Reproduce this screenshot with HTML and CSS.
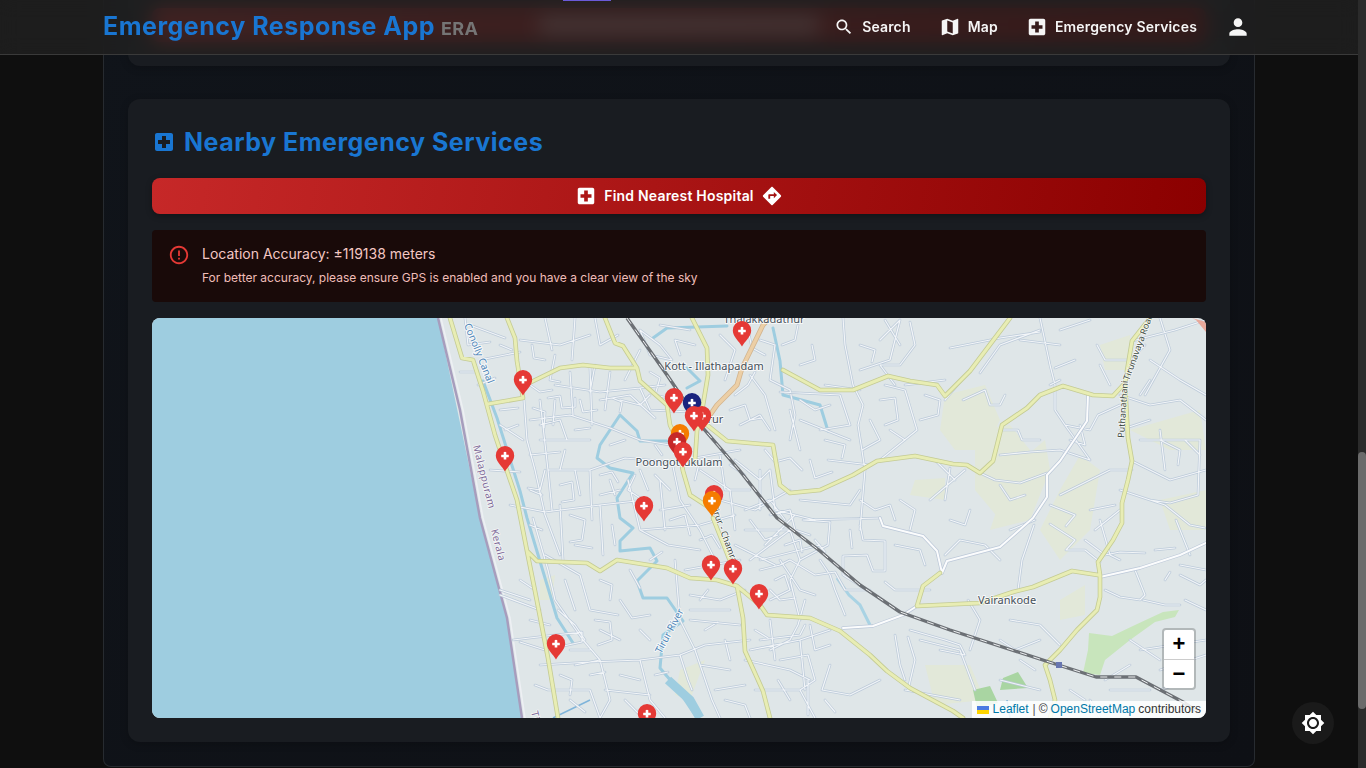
FILE: index.html
```html
<!DOCTYPE html>
<html lang="en">
<head>
<meta charset="utf-8">
<title>Emergency Response App</title>
<link rel="stylesheet" href="styles.css">
</head>
<body>
<svg class="defs" width="0" height="0" aria-hidden="true">
  <defs>
    <symbol id="i-search" viewBox="0 0 24 24"><path d="M15.5 14h-.79l-.28-.27C15.41 12.59 16 11.11 16 9.5 16 5.91 13.09 3 9.5 3S3 5.91 3 9.5 5.91 16 9.5 16c1.61 0 3.09-.59 4.23-1.57l.27.28v.79l5 4.99L20.49 19l-4.99-5zm-6 0C7.01 14 5 11.99 5 9.5S7.01 5 9.5 5 14 7.01 14 9.5 11.99 14 9.5 14z"/></symbol>
    <symbol id="i-map" viewBox="0 0 24 24"><path d="M20.5 3l-.16.03L15 5.1 9 3 3.36 4.9c-.21.07-.36.25-.36.48V20.5c0 .28.22.5.5.5l.16-.03L9 18.9l6 2.1 5.64-1.9c.21-.07.36-.25.36-.48V3.5c0-.28-.22-.5-.5-.5zM15 19l-6-2.11V5l6 2.11V19z"/></symbol>
    <symbol id="i-hospital" viewBox="0 0 24 24"><path d="M19 3H5c-1.1 0-1.99.9-1.99 2L3 19c0 1.1.9 2 2 2h14c1.1 0 2-.9 2-2V5c0-1.1-.9-2-2-2zm-1 11h-4v4h-4v-4H6v-4h4V6h4v4h4v4z"/></symbol>
    <symbol id="i-person" viewBox="0 0 24 24"><path d="M12 12c2.21 0 4-1.79 4-4s-1.79-4-4-4-4 1.79-4 4 1.79 4 4 4zm0 2c-2.67 0-8 1.34-8 4v2h16v-2c0-2.66-5.33-4-8-4z"/></symbol>
    <symbol id="i-directions" viewBox="0 0 24 24"><path d="M21.71 11.29l-9-9c-.39-.39-1.02-.39-1.41 0l-9 9c-.39.39-.39 1.02 0 1.41l9 9c.39.39 1.02.39 1.41 0l9-9c.39-.38.39-1.01 0-1.41zM14 14.5V12h-4v3H8v-4c0-.55.45-1 1-1h5V7.5l3.5 3.5-3.5 3.5z"/></symbol>
    <symbol id="i-error" viewBox="0 0 24 24"><path d="M11 15h2v2h-2zm0-8h2v6h-2zm.99-5C6.47 2 2 6.48 2 12s4.47 10 9.99 10C17.52 22 22 17.52 22 12S17.52 2 11.99 2zM12 20c-4.42 0-8-3.58-8-8s3.58-8 8-8 8 3.58 8 8-3.58 8-8 8z"/></symbol>
    <symbol id="i-bright" viewBox="0 0 24 24"><path d="M20 8.69V4h-4.69L12 .69 8.69 4H4v4.69L.69 12 4 15.31V20h4.69L12 23.31 15.31 20H20v-4.69L23.31 12 20 8.69zM12 18c-3.31 0-6-2.69-6-6s2.69-6 6-6 6 2.69 6 6-2.69 6-6 6zm0-10c-2.21 0-4 1.79-4 4s1.79 4 4 4 4-1.79 4-4-1.79-4-4-4z"/></symbol>
    <g id="pin-body">
      <path d="M0 15.500C-2.500 10.500-9.200 6-9.200-.5A9.200 9.500 0 1 1 9.200-.5C9.200 6 2.500 10.500 0 15.500Z"/>
      <path class="pin-plus" d="M-1.300-3.800Q0-4.500 1.300-3.800V-1.300H3.600Q4.200 0 3.600 1.300H1.300V3.600H-1.300V1.300H-3.600Q-4.200 0-3.600-1.300H-1.300Z"/>
    </g>
    <path id="minor" d="M465 318L468 345L490 342M480 360L520 352M505 338L470 325M460 372L478 372M520 340L560 345L590 335M545 318L552 350M575 318L572 360M595 318L600 345L618 335M640 330L650 355L672 360L660 345M690 330L660 325
    M524 400L527 440L535 470L545 515L560 555M530 420L570 415L610 428L640 440L670 445M540 400L548 470L590 470L625 458L672 462L740 450M570 372L573 415M590 368L592 425M610 372L605 410M555 385L600 392L640 388L665 385M540 440L590 440M548 470L552 510M590 470L592 520M520 472L490 470M523 440L500 425M600 400L630 395L655 418M640 388L650 410L690 412
    M540 425L560 420L567 440L550 440M530 455L560 452M575 470L580 495M610 480L615 495M555 355L550 380L560 382M590 392L595 365M620 400L640 405L650 395M640 350L625 380M660 345L640 330M695 345L675 340L680 355M720 335L735 350L725 380M760 340L775 345L770 380L790 390L795 415L790 440M750 375L765 395L775 430M740 425L760 415L770 430M735 460L760 480L770 470M720 455L725 490L750 490M760 470L760 510M745 510L770 500L785 520M500 345L512 350M478 385L495 378M500 410L518 408M505 430L518 425M555 400L553 425M575 430L590 428M610 445L625 440M560 470L565 450M530 490L542 495M600 495L620 490M640 470L648 490M655 475L670 490M695 480L700 460M730 465L745 475
    M532 345L534 358L545 360M548 398L560 396L562 408L575 407L575 398M533 408L545 412L544 428M580 400L583 412L597 410M612 398L622 402L620 412M650 372L660 378L655 395L668 398M530 385L540 392L552 390M545 470L540 490L528 488M560 485L572 482L574 500L562 502M600 475L612 472L618 482M635 475L628 490L640 498M655 445L662 455M730 410L745 405L750 420L762 418M735 395L748 385L755 372M765 355L752 348L748 330M782 345L795 340L798 325M800 365L815 360L812 345M800 400L815 410L830 405M765 450L775 462L790 458L802 470M810 460L815 478L832 472M825 440L845 445L842 458
    M510 505L545 512L600 505L645 500M560 505L563 560M600 505L603 555M628 480L640 530L668 545L700 550M660 480L665 530M672 462L680 500L700 530L715 560M640 530L700 525L735 515M700 470L730 490L735 530M720 500L755 510L790 490M745 530L790 530L800 560M760 560L820 545M735 545L775 565M660 510L690 505M670 520L685 515L690 535M700 540L712 535L720 548M570 515L585 520L582 540L570 542M612 525L615 545M530 525L542 530M575 545L592 548M650 560L662 552M750 520L765 540L778 535M770 515L790 510L795 530L810 535
    M533 518L548 570L555 600L583 640L600 660L610 700L600 718M545 555L580 575L590 610L618 615M520 580L535 590M500 590L530 600M558 610L575 625L585 640M513 640L555 635L582 632L582 642L545 650L520 642M540 665L590 662L640 660L680 655L705 645L750 640M640 660L650 700L665 718M680 655L688 680L692 690M600 660L575 665M548 690L590 690L600 718M605 690L650 695M500 595L540 610M565 580L575 610M620 600L632 618L650 615M600 630L620 640M620 675L640 680M570 700L585 712M625 700L640 715M530 620L550 625M600 580L612 585L610 600M630 570L640 588M560 675L572 680L570 695M590 675L605 672M655 675L668 672M535 685L548 690M595 620L610 622L612 640L598 645M640 630L650 640M570 650L590 650
    M675 560L680 620L695 650L712 700L720 718M685 570L740 560M690 595L720 600L745 590M690 610L730 610M690 620L740 625M750 650L800 640L830 630M745 660L790 670L810 680M800 640L805 690M770 620L775 660M755 690L800 690L815 718M790 580L800 620M750 560L790 530M700 665L730 670M715 690L745 685M725 640L730 660M705 630L718 622M725 700L745 705L750 718M700 600L708 590M770 590L780 600L795 598M755 630L768 638M778 680L790 700M825 700L835 712
    M760 570L780 565L790 560L815 575L835 572L845 590L870 590M843 556L867 555L873 571L885 571L885 541L863 540L860 525M843 556L843 575L870 592M803 520L830 522L828 545L800 560L790 580M790 590L770 600M780 560L800 590L815 595M820 560L830 575L835 590L845 615M765 545L780 530L795 515M805 600L798 625L790 640L770 650M810 625L815 650L830 645M760 640L800 635L805 625M780 660L808 655L815 680L800 690L775 690M808 680L808 715M830 665L822 690L850 695L880 680M895 635L900 665L905 680M908 637L915 660L908 690M910 630L945 640L960 645L965 655L940 650M930 590L895 590L885 582M968 600L980 620L970 650M803 520L880 518M785 545L800 540L802 552M815 540L825 552M850 530L852 548M775 580L785 575L790 590M860 500L875 510L890 505L895 520M900 500L915 510L910 530M895 545L920 550L925 565M950 520L965 525L970 510
    M843 318L845 345L853 385L863 405L858 425L865 470L860 530M825 385L860 390M780 392L840 395L850 425L820 430M790 410L800 450M800 420L850 440M770 470L775 510L815 520M800 500L850 505L860 490M828 460L870 465M880 340L900 320L890 360L860 370M900 345L885 320M910 322L915 345L900 365L880 365L895 385M885 385L905 390L917 430L880 460M905 385L945 380M945 400L970 370M980 373L1000 345L1040 330M950 348L1000 338L1040 332M1040 318L1050 365L1055 385L1055 410L1065 425L1090 460M1055 368L1075 360M1050 385L1060 380M1020 340L1060 345M860 345L875 350L872 362M880 400L895 398L898 420L885 425M870 420L880 440L862 450M890 430L905 440M925 395L940 400L938 415L920 420
    M1000 455L1030 452L1060 450L1090 460M980 473L995 480L1020 483L1047 473M950 468L945 500M963 400L985 390L990 405L1000 405L1005 395M1000 430L1018 430L1022 440L1040 440M935 460L955 480M930 500L965 470M1010 530L1035 520M1000 560L985 545L960 540L945 555M1060 495L1090 480L1110 470L1132 470M1050 505L1075 515L1066 526M1120 430L1150 420M1160 430L1165 470M1000 485L1010 500L1025 495M1070 440L1085 445L1080 425M1140 395L1150 380M1160 440L1180 450L1178 465M1185 440L1200 455
    M1100 520L1110 555L1120 560M1090 510L1115 505M1095 530L1120 510M1050 524L1075 540L1066 550L1085 550L1100 562M1085 540L1105 555L1120 552L1145 553M1034 525L1022 560L1018 590M1120 490L1150 500L1165 505L1190 525L1205 528M1150 500L1170 503L1198 495L1200 440M1176 520L1190 555M1155 550L1175 548M1165 580L1170 572M1180 575L1200 585L1206 580M1135 570L1145 595L1140 600L1120 597L1105 590M1143 600L1165 605L1180 605M1140 440L1200 440M1132 461L1170 480L1206 470M1120 395L1150 405L1180 400L1206 420M1132 341L1175 330L1206 320M1150 360L1180 380L1206 395M1160 318L1170 350L1145 395M1097 345L1105 360L1130 360L1145 345M1100 365L1110 385M1065 425L1090 430L1098 415L1120 405M1060 330L1090 320M1180 565L1206 570M1185 600L1206 610
    M1010 620L1040 625L1060 645M1000 640L1015 650L1040 640M1020 660L1035 670M1105 680L1130 665M1090 700L1100 718M1000 680L1040 690M920 640L960 650L975 690M905 690L960 700M1130 640L1160 660M1140 650L1206 640M1160 670L1206 655M1110 690L1150 690M1160 690L1190 680M1070 690L1085 700"/>
    <path id="major" d="M1088 395L1087 421L1060 461L1047 475L1047 497L1033 518L1000 547L947 561L942 573M942 573L937 551L923 536L883 526L880 518M917 606L903 615L873 626L843 628M1100 577L1140 568L1180 555L1206 543"/>
    <path id="main" d="M450 318L462 358L473 360L483 391L495 435L505 465L517 500L527 551L535 591L548 658L558 718
    M488 404L523 398M507 318L515 338L517 361L523 398M525 385L560 368L583 365L610 368L637 368
    M605 318L615 343L623 346L637 368L640 381L667 405L670 425L677 440L683 471L690 495L710 508M713 518L730 561
    M692 318L707 348L708 375L703 405L697 431L695 461
    M707 425L727 441L773 445L780 485L790 493L820 490L853 475L877 461L915 456L953 464L967 465L980 473L993 461L1002 425L1027 408L1040 395L1063 386L1093 395L1113 396L1125 383L1132 341L1150 318
    M783 370L820 390L853 390L888 376L910 381L937 385L945 396L970 371L1010 318
    M1125 383L1128 438L1132 461L1128 480L1122 503L1122 523L1113 540L1098 562L1100 575L1100 597L1097 610L1077 630L1060 650L1045 665L1050 680L1055 700L1050 718
    M1098 575L1072 571L1033 587L1013 592L980 603L917 606L923 586L940 573
    M527 551L537 561L587 563L600 571L617 560L667 568L690 578L717 580L737 586L760 605L767 615L810 618L840 631L870 655L887 671L910 688L953 711L963 718
    M737 586L743 618L745 651L763 691L770 718"/>
    <path id="rail" d="M627 318L667 375L703 428L740 471L777 518L820 551L860 585L900 612L950 630L1049 662L1096 677L1136 677L1183 702L1198 712"/>
  </defs>
</svg>

<div class="layout">
  <main class="page">
    <section class="card card-prev">
      <div class="prev-button"><span class="prev-label"></span></div>
    </section>
    <section class="card">
      <h2 class="section-title">
        <svg class="title-icon"><use href="#i-hospital"/></svg>
        <span>Nearby Emergency Services</span>
      </h2>
      <button class="find-btn" type="button">
        <svg class="btn-icon"><use href="#i-hospital"/></svg>
        <span class="btn-text">Find Nearest Hospital</span>
        <svg class="btn-icon"><use href="#i-directions"/></svg>
      </button>
      <div class="alert">
        <svg class="alert-icon"><use href="#i-error"/></svg>
        <div class="alert-body">
          <p class="alert-title">Location Accuracy: ±119138 meters</p>
          <p class="alert-note">For better accuracy, please ensure GPS is enabled and you have a clear view of the sky</p>
        </div>
      </div>
      <div class="map">
        <svg class="map-canvas" viewBox="152 318 1054 400" width="1054" height="400">
          <rect class="land" x="152" y="318" width="1054" height="400"/>
          <path class="grass" d="M945 395L985 385L1000 420L985 450L955 450L940 430ZM975 430L1010 425L1030 450L1000 520L975 490ZM1010 470L1045 440L1050 470L1030 520L990 530ZM1080 455L1100 470L1090 530L1060 560L1040 530L1060 490ZM915 480L945 478L945 500L910 495ZM1130 430L1200 410L1206 450L1170 450ZM1160 500L1206 490L1206 530L1170 530ZM680 670L705 660L690 700L675 695ZM540 580L555 575L552 600L540 600ZM1060 600L1085 585L1085 615L1060 620ZM1100 345L1130 335L1130 370L1105 370ZM925 665L970 665L985 700L935 705Z"/>
          <path class="forest" d="M1089 633L1112 636L1135 625L1163 612L1179 610L1175 617L1155 622L1130 640L1105 660L1100 675L1083 673L1088 650Z"/>
          <path class="forest-dark" d="M1003 678L1018 672L1028 688L1000 690ZM973 690L990 686L998 703L977 708Z"/>
          <path class="water" d="M152 318H438L480 518L507 618L522 718H152Z"/>
          <path class="boundary" d="M438 318L460 410L480 518L507 618L522 718"/>
          <path class="boundary-inner" d="M441 318L463 410L483 518L510 618L525 718"/>
          <path class="river" d="M483 381L497 418L520 491L527 518L542 568L557 618L573 643M620 415L600 445L597 458L610 468L633 473L617 498L620 518L633 528L620 541L620 551L650 548L657 561L637 581L643 598L667 598L683 621L663 635L660 668L677 688L697 718M620 415L637 431L640 441L667 441M773 328L780 361L783 395L820 405L828 431M653 338L667 328L727 326M687 368L700 381L687 388"/>
          <path class="river-wide" d="M668 680L690 700L700 718"/>
          <path class="river-pale" d="M837 578L849 595L860 605L870 625"/>
          <path class="river-thin" d="M553 718L590 700M1007 700L1010 718"/>
          <use class="road-case" href="#minor"/>
          <use class="road-fill" href="#minor"/>
          <use class="major-case" href="#major"/>
          <use class="major-fill" href="#major"/>
          <use class="main-case" href="#main"/>
          <use class="main-fill" href="#main"/>
          <path class="trunk-case" d="M770 318L763 325L742 368L737 385L717 405L710 415L695 422"/>
          <path class="trunk-fill" d="M770 318L763 325L742 368L737 385L717 405L710 415L695 422"/>
          <use class="rail-case" href="#rail"/>
          <use class="rail-dash" href="#rail"/>
          <path class="station" d="M1056 662h6v6h-6z"/>
          <path class="rail-edge" d="M1192 318L1206 322L1206 332L1196 320Z"/>
          <text class="label" x="764" y="323" text-anchor="middle">Thalakkadathur</text>
          <text class="label" x="714" y="370" text-anchor="middle">Kott - Illathapadam</text>
          <text class="label" x="679" y="466" text-anchor="middle">Poongottukulam</text>
          <text class="label" x="711" y="423" text-anchor="middle">Tirur</text>
          <text class="label" x="1007" y="604" text-anchor="middle">Vairankode</text>
          <text class="label-water" transform="translate(464 325) rotate(68)">Conolly Canal</text>
          <text class="label-water" transform="translate(661 654) rotate(-62)">Tirur River</text>
          <text class="label-admin" transform="translate(473 446) rotate(76)">Malappuram</text>
          <text class="label-admin" transform="translate(491 530) rotate(76)">Kerala</text>
          <text class="label-admin" transform="translate(531 712) rotate(76)">Tirur</text>
          <text class="label-road" transform="translate(711 506) rotate(70)">Tirur - Chamra</text>
          <text class="label-road" transform="translate(1124 438) rotate(-86)">Puthanathani -</text>
          <text class="label-road" transform="translate(1129 381) rotate(-70)">Tirunavaya Road</text>
          <use class="pin-navy" href="#pin-body" x="692" y="403"/>
          <use class="pin-red" href="#pin-body" x="742" y="331"/>
          <use class="pin-red" href="#pin-body" x="523" y="380"/>
          <use class="pin-red" href="#pin-body" x="505" y="456"/>
          <use class="pin-red" href="#pin-body" x="674" y="398"/>
          <use class="pin-red" href="#pin-body" x="702" y="416"/>
          <use class="pin-red" href="#pin-body" x="694" y="416"/>
          <use class="pin-orange" href="#pin-body" x="680" y="434"/>
          <use class="pin-dark" href="#pin-body" x="677" y="442"/>
          <use class="pin-red" href="#pin-body" x="683" y="452"/>
          <use class="pin-red" href="#pin-body" x="714" y="495"/>
          <use class="pin-orange" href="#pin-body" x="712" y="501"/>
          <use class="pin-red" href="#pin-body" x="644" y="506"/>
          <use class="pin-red" href="#pin-body" x="711" y="565"/>
          <use class="pin-red" href="#pin-body" x="733" y="569"/>
          <use class="pin-red" href="#pin-body" x="759" y="594"/>
          <use class="pin-red" href="#pin-body" x="556" y="644"/>
          <use class="pin-red" href="#pin-body" x="647" y="714"/>
        </svg>
        <div class="zoom-control">
          <span class="zoom-btn zoom-in">+</span>
          <span class="zoom-btn">−</span>
        </div>
        <div class="attribution">
          <span class="flag"></span>
          <span class="attr-link attr-leaflet">Leaflet</span>
          <span class="attr-sep">|</span>
          <span>©</span>
          <span class="attr-link">OpenStreetMap</span>
          <span>contributors</span>
        </div>
      </div>
    </section>
  </main>
  <div class="scrollbar"><div class="scroll-thumb"></div></div>
</div>

<header class="navbar">
  <div class="nav-inner">
    <div class="brand">
      <span class="brand-name">Emergency Response App</span>
      <span class="brand-short">ERA</span>
    </div>
    <nav class="nav-links">
      <a class="nav-link"><svg class="nav-icon-search"><use href="#i-search"/></svg><span class="nav-text">Search</span></a>
      <a class="nav-link"><svg class="nav-icon"><use href="#i-map"/></svg><span class="nav-text">Map</span></a>
      <a class="nav-link"><svg class="nav-icon"><use href="#i-hospital"/></svg><span class="nav-text">Emergency Services</span></a>
      <a class="nav-link"><svg class="person-icon"><use href="#i-person"/></svg></a>
    </nav>
  </div>
</header>
<div class="top-accent"></div>

<button class="theme-fab" type="button" aria-label="Toggle theme">
  <svg class="fab-icon"><use href="#i-bright"/></svg>
</button>
</body>
</html>
```
FILE: styles.css
```css
* { box-sizing: border-box; }
html, body { margin: 0; height: 768px; overflow: hidden; }
body {
  background: #0f0f0f;
  font-family: "Inter", "Liberation Sans", sans-serif;
  color: #fff;
  position: relative;
}
.defs { position: absolute; }
svg { fill: currentColor; display: block; }

.layout { display: flex; height: 768px; }
.page {
  width: 1152px;
  height: 767px;
  margin: 0 auto;
  padding: 0 24px;
  background: linear-gradient(135deg, #10141a, #0e1015);
  border: 1px solid #272b30;
  border-top: 0;
  border-radius: 0 0 8px 8px;
  display: flex;
  flex-direction: column;
  gap: 33px;
}
.card {
  background: #191c21;
  border-radius: 12px;
  padding: 24px;
  box-shadow: 0 2px 8px rgba(0, 0, 0, .2);
}
.card-prev {
  height: 66px;
  border-radius: 0 0 12px 12px;
  padding: 8px 24px 0;
}
.prev-button {
  height: 34px;
  background: linear-gradient(90deg, #c62828, #8b0000);
  border-radius: 8px;
  display: flex;
  justify-content: center;
  align-items: center;
}
.prev-label { width: 280px; height: 12px; background: #e8b8b8; }

.section-title {
  margin: 2px 0 19px;
  height: 34px;
  display: flex;
  align-items: center;
  gap: 8px;
  color: #1976d2;
  font-size: 25px;
  font-weight: 700;
  letter-spacing: .5px;
}
.title-icon { width: 24px; height: 24px; }

.find-btn {
  width: 100%;
  height: 36px;
  border: 0;
  border-radius: 8px;
  background: linear-gradient(100deg, #c62828, #8b0000);
  color: #fff;
  display: flex;
  align-items: center;
  justify-content: center;
  gap: 7px;
  font: 600 14px "Inter", sans-serif;
  letter-spacing: .2px;
  box-shadow: 0 2px 6px rgba(0, 0, 0, .3);
  margin-bottom: 16px;
}
.btn-text { margin-bottom: 2px; }
.btn-icon { width: 22px; height: 22px; }

.alert {
  height: 72px;
  background: #190a09;
  border-radius: 4px;
  padding: 13px 16px;
  display: flex;
  gap: 12px;
  margin-bottom: 16px;
}
.alert-icon { width: 22px; height: 22px; margin-top: 1px; color: #e53935; flex: none; }
.alert-title { margin: 1px 0 0; font-size: 14px; line-height: 20px; color: #f4c7c3; }
.alert-note { margin: 5px 0 0; font-size: 12px; line-height: 18px; color: #f0bdb8; }

.map {
  position: relative;
  height: 400px;
  border-radius: 8px;
  overflow: hidden;
}
.map-canvas { fill: none; }
.land { fill: #dfe6e8; }
.water { fill: #9ecde0; }
.boundary { fill: none; stroke: #a79dbd; stroke-width: 2.5; }
.boundary-inner { fill: none; stroke: #eef0f4; stroke-width: 1.5; }
.grass { fill: #e2e8d9; }
.forest { fill: #c8e5bc; }
.forest-dark { fill: #a9d5a2; }
.river { fill: none; stroke: #9ecde0; stroke-width: 3; stroke-linejoin: round; stroke-linecap: round; }
.river-wide { fill: none; stroke: #9ecde0; stroke-width: 9; }
.river-pale { fill: none; stroke: #a9d3e4; stroke-width: 3; }
.river-thin { fill: none; stroke: #7fb4da; stroke-width: 1.5; }
.road-case { fill: none; stroke: #bccad9; stroke-width: 2.6; stroke-linejoin: round; stroke-linecap: round; }
.road-fill { fill: none; stroke: #f2f5f8; stroke-width: 1.2; stroke-linejoin: round; stroke-linecap: round; }
.major-case { fill: none; stroke: #bcc8d8; stroke-width: 3.4; stroke-linejoin: round; stroke-linecap: round; }
.major-fill { fill: none; stroke: #fbfcfd; stroke-width: 2; stroke-linejoin: round; stroke-linecap: round; }
.main-case { fill: none; stroke: #c4cb94; stroke-width: 4.6; stroke-linejoin: round; stroke-linecap: round; }
.main-fill { fill: none; stroke: #e8edb4; stroke-width: 3; stroke-linejoin: round; stroke-linecap: round; }
.trunk-case { fill: none; stroke: #d2b48e; stroke-width: 5; stroke-linejoin: round; }
.trunk-fill { fill: none; stroke: #eccfa6; stroke-width: 3.4; stroke-linejoin: round; }
.rail-case { fill: none; stroke: #6c7075; stroke-width: 3.4; stroke-linejoin: round; }
.rail-dash { fill: none; stroke: #eef0f2; stroke-width: 1; stroke-dasharray: 7 7; }
.station { fill: #6876b0; }
.rail-edge { fill: #e8a89a; }

.label, .label-water, .label-admin, .label-road {
  font-family: "Noto Sans", sans-serif;
  paint-order: stroke;
  stroke: rgba(255, 255, 255, .75);
  stroke-width: 2px;
  stroke-linejoin: round;
}
.label { font-size: 11px; fill: #46505a; }
.label-water { font-size: 10px; fill: #4d85b8; }
.label-admin { font-size: 10px; fill: #7d6a98; letter-spacing: .5px; stroke-width: 1.5px; }
.label-road { font-size: 9px; fill: #3d4a40; stroke-width: 1.5px; }

.pin-red { fill: #e53935; }
.pin-dark { fill: #c62828; }
.pin-orange { fill: #f57c00; }
.pin-navy { fill: #1a237e; }
.pin-plus { fill: #fff; }

.zoom-control {
  position: absolute;
  right: 10px;
  bottom: 28px;
  width: 34px;
  height: 62px;
  border: 2px solid rgba(0, 0, 0, .2);
  border-radius: 4px;
  background: #fff;
  display: flex;
  flex-direction: column;
  background-clip: padding-box;
}
.zoom-btn {
  flex: 1;
  display: flex;
  align-items: center;
  justify-content: center;
  color: #000;
  font: 700 22px "Liberation Sans", sans-serif;
}
.zoom-in { border-bottom: 1px solid #ccc; }

.attribution {
  position: absolute;
  right: 0;
  bottom: 0;
  height: 17px;
  padding: 0 5px;
  display: flex;
  align-items: center;
  gap: 3px;
  background: rgba(255, 255, 255, .85);
  color: #333;
  font: 12px/17px "Liberation Sans", sans-serif;
}
.attr-link { color: #0078a8; }
.attr-leaflet { margin-right: 1px; }
.attr-sep { color: #555; }
.flag {
  width: 12px;
  height: 8px;
  margin-right: 1px;
  background: linear-gradient(#4c7be1 50%, #ffd500 50%);
}

.scrollbar {
  flex: none;
  width: 8px;
  height: 768px;
  background: #2b2b2b;
  padding-top: 452px;
}
.scroll-thumb { height: 257px; background: #6b6b6b; border-radius: 4px; }

.navbar {
  position: absolute;
  top: 0;
  left: 0;
  width: 1358px;
  height: 55px;
  background: rgba(33, 33, 33, .8);
  backdrop-filter: blur(10px);
  border-bottom: 1px solid #3a3a3a;
  padding: 0 103px;
}
.nav-inner { height: 54px; display: flex; align-items: center; justify-content: space-between; }
.brand { display: flex; align-items: baseline; gap: 6px; padding-bottom: 2px; }
.brand-name { color: #1976d2; font-size: 25px; font-weight: 700; letter-spacing: .52px; }
.brand-short { color: #757575; font-size: 18px; font-weight: 700; letter-spacing: .3px; }
.nav-links { display: flex; align-items: center; gap: 28px; padding-right: 4px; }
.nav-link { display: flex; align-items: center; gap: 7px; color: #f5f5f5; font-size: 14px; font-weight: 600; letter-spacing: .17px; }
.nav-text { margin-bottom: 2px; }
.nav-icon { width: 22px; height: 22px; }
.nav-icon-search { width: 20px; height: 20px; margin-right: 1.5px; }
.person-icon { width: 26px; height: 26px; }
.top-accent { position: absolute; top: 0; left: 563px; width: 48px; height: 1px; background: #6a5ad8; }

.theme-fab {
  position: absolute;
  left: 1292px;
  top: 702px;
  width: 42px;
  height: 42px;
  padding: 0;
  border: 0;
  border-radius: 50%;
  background: #1a1a1a;
  color: #fff;
  display: flex;
  align-items: center;
  justify-content: center;
}
.fab-icon { width: 24px; height: 24px; }
```
